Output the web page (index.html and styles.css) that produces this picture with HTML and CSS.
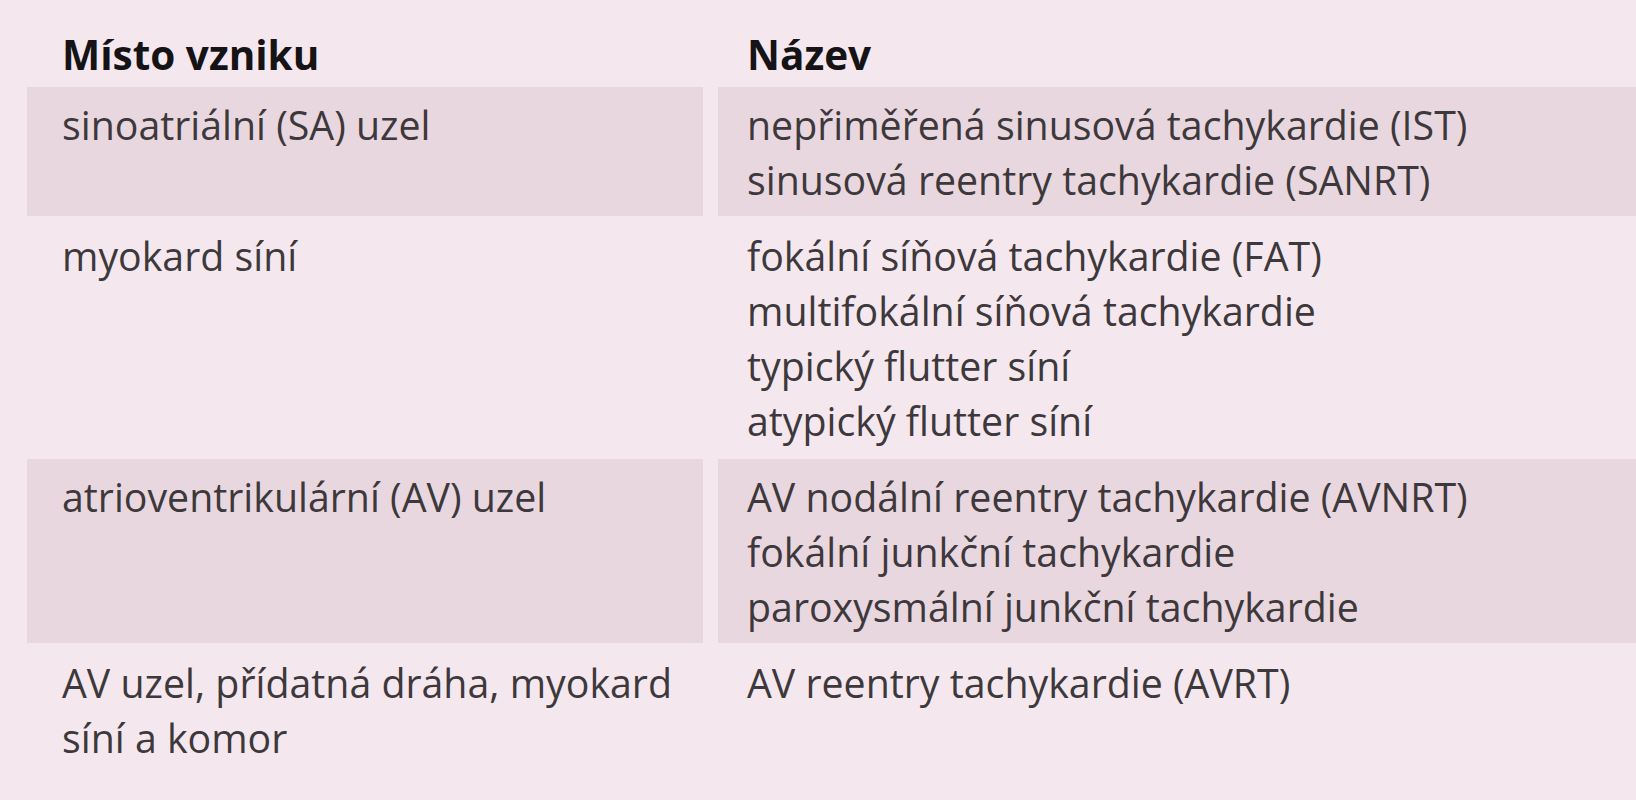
FILE: index.html
```html
<!DOCTYPE html>
<html lang="cs">
<head>
<meta charset="utf-8">
<title>Tachykardie</title>
<link rel="stylesheet" href="styles.css">
</head>
<body>
<div class="table">
  <div class="cell head">Místo vzniku</div>
  <div class="cell head right">Název</div>

  <div class="cell shade">sinoatriální (SA) uzel</div>
  <div class="cell shade right">nepřiměřená sinusová tachykardie (IST)<br>sinusová reentry tachykardie (SANRT)</div>

  <div class="cell">myokard síní</div>
  <div class="cell right">fokální síňová tachykardie (FAT)<br>multifokální síňová tachykardie<br>typický flutter síní<br>atypický flutter síní</div>

  <div class="cell shade">atrioventrikulární (AV) uzel</div>
  <div class="cell shade right">AV nodální reentry tachykardie (AVNRT)<br>fokální junkční tachykardie<br>paroxysmální junkční tachykardie</div>

  <div class="cell">AV uzel, přídatná dráha, myokard<br>síní a komor</div>
  <div class="cell right">AV reentry tachykardie (AVRT)</div>
</div>
</body>
</html>
```

FILE: styles.css
```css
html, body {
  margin: 0;
  padding: 0;
  background: #f4e8ee;
}
body {
  width: 1636px;
  height: 800px;
  overflow: hidden;
  font-family: "Open Sans", "DejaVu Sans", sans-serif;
  font-weight: 400;
  color: #3d383b;
}
.table {
  display: grid;
  grid-template-columns: 676px 1fr;
  column-gap: 15px;
  padding-left: 27px;
}
.cell {
  font-size: 39.3px;
  line-height: 55px;
  padding: 13px 0 10px 35px;
  white-space: nowrap;
}
.cell.right {
  padding-left: 29px;
}
.head {
  color: #151315;
  font-size: 40.5px;
  font-weight: 700;
  padding-top: 27px;
  padding-bottom: 5px;
}
.shade {
  background: #e9d7df;
  padding-top: 11px;
  padding-bottom: 8px;
}
```
